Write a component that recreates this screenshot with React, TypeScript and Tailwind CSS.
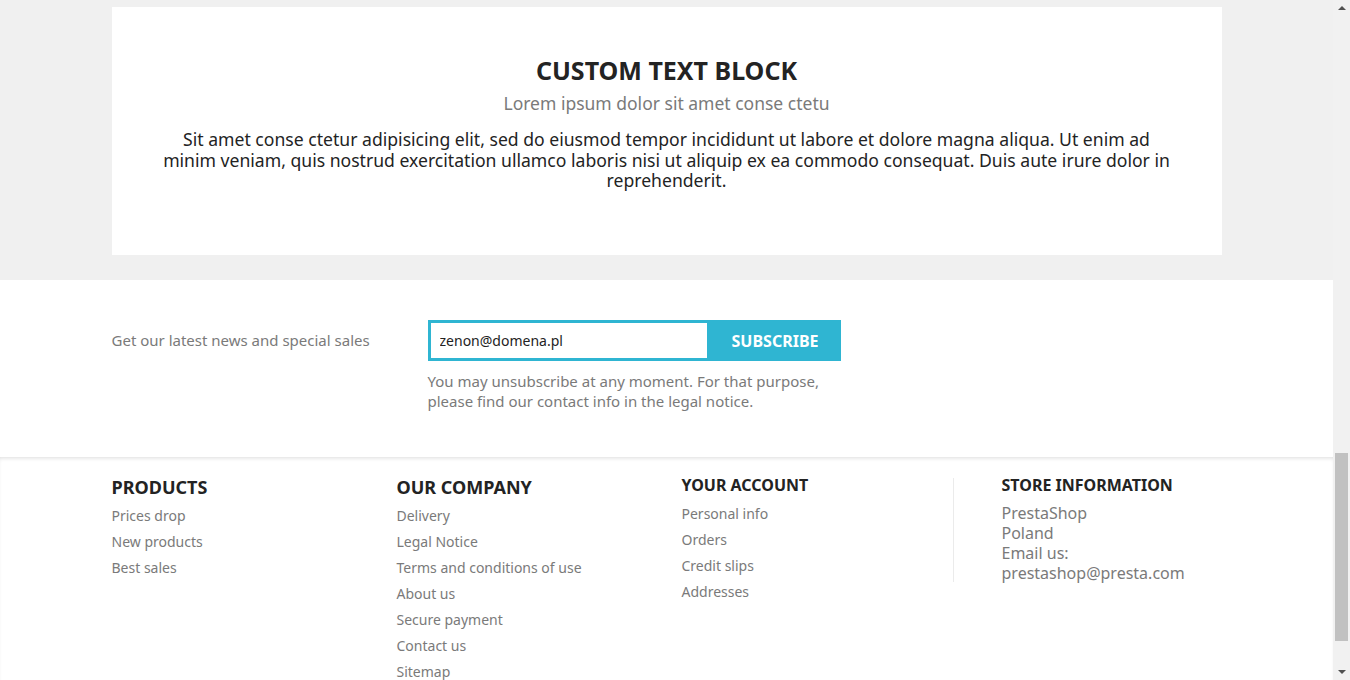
const productLinks = ["Prices drop", "New products", "Best sales"];
const companyLinks = [
  "Delivery",
  "Legal Notice",
  "Terms and conditions of use",
  "About us",
  "Secure payment",
  "Contact us",
  "Sitemap",
];
const accountLinks = ["Personal info", "Orders", "Credit slips", "Addresses"];

const LinkList = ({ items }: { items: string[] }) => (
  <ul className="flex flex-col">
    {items.map((item) => (
      <li key={item} className="h-[26px] text-[14px] leading-[22px] text-[#7a7a7a]">
        {item}
      </li>
    ))}
  </ul>
);

const Scrollbar = () => (
  <div className="flex h-full w-[17px] shrink-0 flex-col items-center bg-[#f1f1f1]">
    <div className="mt-[6px] h-0 w-0 border-x-[4px] border-b-[4px] border-x-transparent border-b-[#505050]" />
    <div className="h-[443px]" />
    <div className="h-[188px] w-[13px] bg-[#c1c1c1]" />
    <div className="flex-1" />
    <div className="mb-[6px] h-0 w-0 border-x-[4px] border-t-[4px] border-x-transparent border-t-[#505050]" />
  </div>
);

const App = () => {
  return (
    <div
      className="flex h-[680px] w-full overflow-hidden bg-white"
      style={{ fontFamily: '"Noto Sans", "Open Sans", sans-serif' }}
    >
      <div className="flex min-w-0 flex-1 flex-col">
        {/* Custom text block */}
        <section className="h-[280px] shrink-0 bg-[#f0f0f0] pt-[7px]">
          <div className="mx-auto flex h-[248px] w-[1110px] flex-col items-center bg-white px-[50px] pt-[47px] text-center">
            <h2 className="text-[25px] font-bold leading-[32px] text-[#232323]">CUSTOM TEXT BLOCK</h2>
            <p className="mt-[5px] text-[17.5px] leading-[24px] text-[#7a7a7a]">
              Lorem ipsum dolor sit amet conse ctetu
            </p>
            <p className="mt-[14px] text-[17.6px] leading-[20.5px] text-[#232323]">
              Sit amet conse ctetur adipisicing elit, sed do eiusmod tempor incididunt ut labore et dolore
              magna aliqua. Ut enim ad minim veniam, quis nostrud exercitation ullamco laboris nisi ut aliquip
              ex ea commodo consequat. Duis aute irure dolor in reprehenderit.
            </p>
          </div>
        </section>

        {/* Newsletter */}
        <section className="h-[177px] shrink-0 bg-white pt-[40px]">
          <div className="mx-auto flex w-[1110px] items-start">
            <p className="w-[316px] shrink-0 pt-[9px] text-[15px] leading-[22px] text-[#7a7a7a]">
              Get our latest news and special sales
            </p>
            <div className="flex flex-col">
              <div className="flex h-[41px]">
                <input
                  type="text"
                  defaultValue="zenon@domena.pl"
                  className="h-[41px] w-[282px] shrink-0 border-[3px] border-[#2fb5d2] px-[9px] text-[14px] text-[#232323] outline-none"
                />
                <button className="h-[41px] w-[131px] shrink-0 bg-[#2fb5d2] text-[16px] font-bold text-white">
                  SUBSCRIBE
                </button>
              </div>
              <p className="mt-[10px] text-[15px] leading-[20px] text-[#7a7a7a]">
                You may unsubscribe at any moment. For that purpose,
                <br />
                please find our contact info in the legal notice.
              </p>
            </div>
          </div>
        </section>

        {/* Footer */}
        <footer className="min-h-0 flex-1 bg-white pt-[18px] shadow-[inset_0_3px_4px_-2px_rgba(0,0,0,0.14)]">
          <div className="mx-auto flex w-[1110px]">
            <div className="w-[285px]">
              <h3 className="text-[18px] font-bold leading-[24px] text-[#232323]">PRODUCTS</h3>
              <div className="mt-[6px]">
                <LinkList items={productLinks} />
              </div>
            </div>
            <div className="w-[285px]">
              <h3 className="text-[18px] font-bold leading-[24px] text-[#232323]">OUR COMPANY</h3>
              <div className="mt-[6px]">
                <LinkList items={companyLinks} />
              </div>
            </div>
            <div className="w-[271px]">
              <h3 className="text-[16px] font-bold leading-[20px] text-[#232323]">YOUR ACCOUNT</h3>
              <div className="mt-[8px]">
                <LinkList items={accountLinks} />
              </div>
            </div>
            <div className="mt-[3px] h-[104px] flex-1 self-start border-l border-[#ebebeb] pl-[48px]">
              <h3 className="-mt-[3px] text-[16px] font-bold leading-[20px] text-[#232323]">STORE INFORMATION</h3>
              <div className="mt-[8px] text-[16px] leading-[20px] text-[#7a7a7a]">
                PrestaShop
                <br />
                Poland
                <br />
                Email us:
                <br />
                prestashop@presta.com
              </div>
            </div>
          </div>
        </footer>
      </div>
      <Scrollbar />
    </div>
  );
};

export default App;
